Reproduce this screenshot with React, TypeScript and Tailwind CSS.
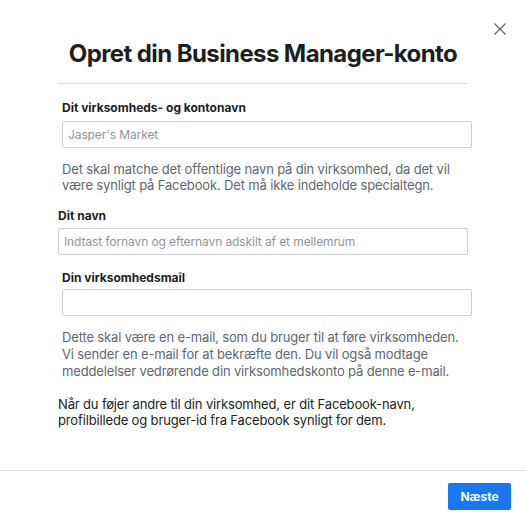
export default function App() {
    return (
        <div
            className="relative w-[526px] h-[522px] bg-white flex flex-col text-[#1c1e21]"
            style={{ fontFamily: "Inter, 'Noto Sans', sans-serif" }}
        >
            {/* Close */}
            <button className="absolute left-[494px] top-[23px] w-[12px] h-[12px] text-[#606770]">
                <svg viewBox="0 0 12 12" width="12" height="12" fill="none" stroke="currentColor" strokeWidth="1.2">
                    <path d="M0.5 0.5L11.5 11.5M11.5 0.5L0.5 11.5" />
                </svg>
            </button>

            {/* Body */}
            <div className="flex-1 px-[58px] pt-[40px]">
                <h1 className="text-[24px] leading-[28px] font-bold text-center tracking-[-0.6px]">
                    Opret din Business Manager-konto
                </h1>
                <div className="mt-[15px] w-[410px] h-px bg-[#dadde1]"></div>

                <div className="ml-[4px]">
                    <div className="mt-[16px] text-[12px] leading-[16px] font-bold">
                        Dit virksomheds- og kontonavn
                    </div>
                    <input
                        type="text"
                        placeholder="Jasper's Market"
                        className="mt-[5px] block w-[410px] h-[27px] px-[5px] border border-[#ccd0d5] rounded-[2px] text-[12px] tracking-[-0.1px] placeholder-[#90949c] outline-none"
                    />
                    <p className="mt-[13px] text-[13px] leading-[16px] tracking-[-0.15px] text-[#606770]">
                        Det skal matche det offentlige navn på din virksomhed, da det vil
                        <br />
                        være synligt på Facebook. Det må ikke indeholde specialtegn.
                    </p>
                </div>

                <div className="mt-[15px] text-[12px] leading-[16px] font-bold">Dit navn</div>
                <input
                    type="text"
                    placeholder="Indtast fornavn og efternavn adskilt af et mellemrum"
                    className="mt-[4px] block w-[410px] h-[27px] px-[5px] border border-[#ccd0d5] rounded-[2px] text-[12px] tracking-[-0.1px] placeholder-[#90949c] outline-none"
                />

                <div className="ml-[4px]">
                    <div className="mt-[15px] text-[12px] leading-[16px] font-bold">
                        Din virksomhedsmail
                    </div>
                    <input
                        type="email"
                        className="mt-[3px] block w-[410px] h-[27px] px-[5px] border border-[#ccd0d5] rounded-[2px] text-[12px] outline-none"
                    />
                    <p className="mt-[13px] text-[13px] leading-[17px] tracking-[-0.15px] text-[#606770]">
                        Dette skal være en e-mail, som du bruger til at føre virksomheden.
                        <br />
                        Vi sender en e-mail for at bekræfte den. Du vil også modtage
                        <br />
                        meddelelser vedrørende din virksomhedskonto på denne e-mail.
                    </p>
                </div>

                <p className="mt-[16px] text-[13px] leading-[16px] tracking-[-0.15px]">
                    Når du føjer andre til din virksomhed, er dit Facebook-navn,
                    <br />
                    profilbillede og bruger-id fra Facebook synligt for dem.
                </p>
            </div>

            {/* Footer */}
            <div className="border-t border-[#dadde1] flex justify-end pt-[12px] pb-[12px] pr-[15px]">
                <button className="w-[63px] h-[27px] rounded-[2px] bg-[#1877f2] text-white text-[12px] font-bold">
                    Næste
                </button>
            </div>
        </div>
    );
}
